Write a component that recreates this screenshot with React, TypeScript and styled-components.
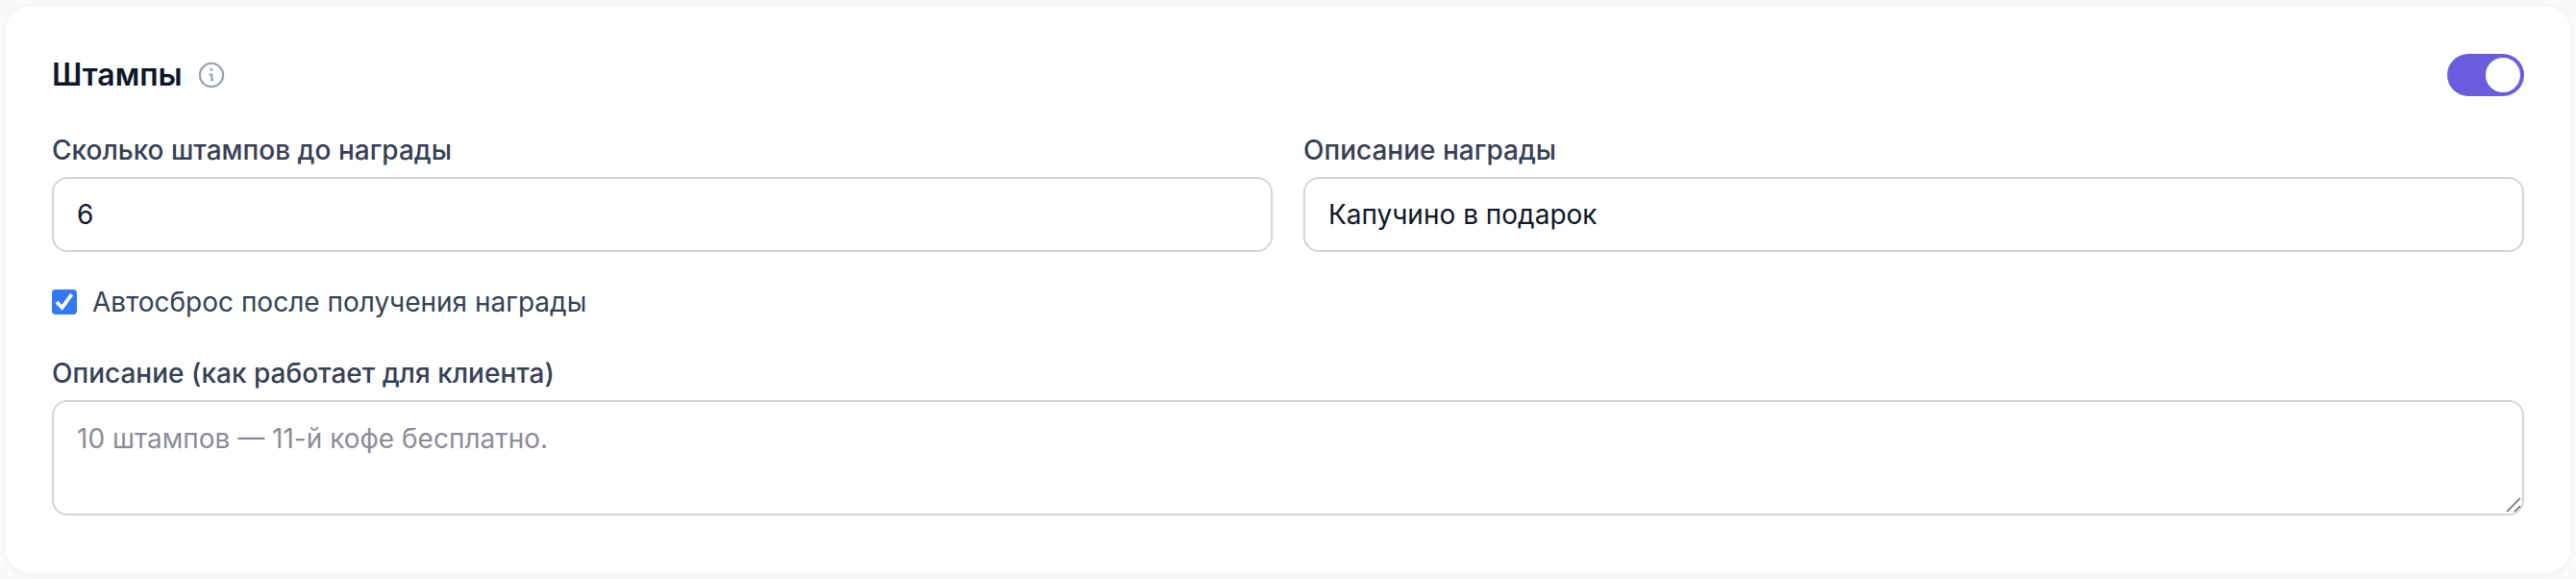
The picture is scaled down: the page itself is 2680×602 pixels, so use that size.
import React, { useState } from "react";
import styled, { createGlobalStyle } from "styled-components";

const GlobalStyle = createGlobalStyle`
  *, *::before, *::after { box-sizing: border-box; }
  body {
    margin: 0;
    padding: 4px;
    background: #f9fafc;
    color: #0f172a;
    font-family: Inter, "Liberation Sans", sans-serif;
    font-size: 28px;
    line-height: 36px;
  }
`;

const Card = styled.section`
  display: flex;
  flex-direction: column;
  padding: 48px 48px 60px;
  background: #ffffff;
  border: 2px solid #f3f5fa;
  border-radius: 28px;
  box-shadow: 0 2px 6px rgba(15, 23, 42, 0.03);
`;

const Header = styled.header`
  display: flex;
  align-items: center;
  justify-content: space-between;
  height: 48px;
`;

const TitleGroup = styled.div`
  display: flex;
  align-items: center;
  gap: 14px;
`;

const Title = styled.h2`
  margin: 0;
  font-size: 32px;
  line-height: 48px;
  font-weight: 600;
`;

const InfoButton = styled.button`
  display: flex;
  padding: 0;
  border: 0;
  background: none;
  color: #9ca3b4;
  cursor: pointer;
`;

const Toggle = styled.input`
  appearance: none;
  display: flex;
  align-items: center;
  width: 80px;
  height: 44px;
  margin: 0;
  padding: 4px;
  border-radius: 22px;
  background: #cbd5e1;
  cursor: pointer;

  &::before {
    content: "";
    width: 36px;
    height: 36px;
    border-radius: 50%;
    background: #ffffff;
  }

  &:checked {
    justify-content: flex-end;
    background: #6b5cde;
  }
`;

const FieldRow = styled.div`
  display: grid;
  grid-template-columns: 1fr 1fr;
  gap: 32px;
  margin-top: 36px;
`;

const Field = styled.div`
  display: flex;
  flex-direction: column;
  gap: 10px;
`;

const Label = styled.label`
  color: #374155;
  font-weight: 500;
`;

const TextInput = styled.input`
  width: 100%;
  height: 78px;
  padding: 0 24px;
  border: 2px solid #d1d5db;
  border-radius: 16px;
  background: #ffffff;
  color: #0f172a;
  font: inherit;
`;

const CheckLabel = styled.label`
  display: flex;
  align-items: center;
  gap: 16px;
  margin: 34px 0 38px;
  color: #374155;
`;

const CheckFrame = styled.span`
  display: grid;
  width: 26px;
  height: 26px;

  > * {
    grid-area: 1 / 1;
  }

  svg {
    pointer-events: none;
  }
`;

const CheckBox = styled.input`
  appearance: none;
  margin: 0;
  border: 2px solid #767676;
  border-radius: 4px;

  &:checked {
    border: 0;
    background: #3478f6;
  }
`;

const TextAreaFrame = styled.div`
  position: relative;
  display: flex;
`;

const TextArea = styled.textarea`
  width: 100%;
  height: 120px;
  padding: 20px 24px;
  border: 2px solid #d1d5db;
  border-radius: 16px;
  background: #ffffff;
  color: #0f172a;
  font: inherit;
  resize: vertical;

  &::placeholder {
    color: #8b8d98;
    opacity: 1;
  }

  &::-webkit-resizer {
    background: transparent;
  }
`;

const Grip = styled.svg`
  position: absolute;
  right: 3px;
  bottom: 3px;
  pointer-events: none;
`;

export default function App() {
  const [enabled, setEnabled] = useState(true);
  const [stamps, setStamps] = useState("6");
  const [reward, setReward] = useState("Капучино в подарок");
  const [autoReset, setAutoReset] = useState(true);
  const [description, setDescription] = useState("");

  return (
    <>
      <GlobalStyle />
      <Card>
        <Header>
          <TitleGroup>
            <Title id="stamps-title">Штампы</Title>
            <InfoButton type="button" aria-label="Подробнее о штампах">
              <svg width="32" height="32" viewBox="0 0 32 32" fill="none" stroke="currentColor" strokeWidth="2.3" strokeLinecap="round" strokeLinejoin="round">
                <circle cx="16" cy="16" r="12.1" />
                <path d="M14.4 15.6h1.9v5.6M16.3 21.2h1.1" />
                <circle cx="16" cy="10.5" r="1.4" fill="currentColor" stroke="none" />
              </svg>
            </InfoButton>
          </TitleGroup>
          <Toggle
            type="checkbox"
            role="switch"
            aria-labelledby="stamps-title"
            checked={enabled}
            onChange={(e) => setEnabled(e.target.checked)}
          />
        </Header>

        <FieldRow>
          <Field>
            <Label htmlFor="stamps">Сколько штампов до награды</Label>
            <TextInput id="stamps" inputMode="numeric" value={stamps} onChange={(e) => setStamps(e.target.value)} />
          </Field>
          <Field>
            <Label htmlFor="reward">Описание награды</Label>
            <TextInput id="reward" value={reward} onChange={(e) => setReward(e.target.value)} />
          </Field>
        </FieldRow>

        <CheckLabel>
          <CheckFrame>
            <CheckBox type="checkbox" checked={autoReset} onChange={(e) => setAutoReset(e.target.checked)} />
            {autoReset && (
              <svg width="26" height="26" viewBox="0 0 26 26" fill="none" stroke="#ffffff" strokeWidth="3.8">
                <path d="M5 13.2 10.6 18.8 20.6 5.2" />
              </svg>
            )}
          </CheckFrame>
          Автосброс после получения награды
        </CheckLabel>

        <Field>
          <Label htmlFor="description">Описание (как работает для клиента)</Label>
          <TextAreaFrame>
            <TextArea
              id="description"
              placeholder="10 штампов — 11-й кофе бесплатно."
              value={description}
              onChange={(e) => setDescription(e.target.value)}
            />
            <Grip width="16" height="16" viewBox="0 0 16 16" fill="none" stroke="#6b6b6b" strokeWidth="1.6">
              <path d="M1 15 15 1M9 15l6-6" />
            </Grip>
          </TextAreaFrame>
        </Field>
      </Card>
    </>
  );
}
